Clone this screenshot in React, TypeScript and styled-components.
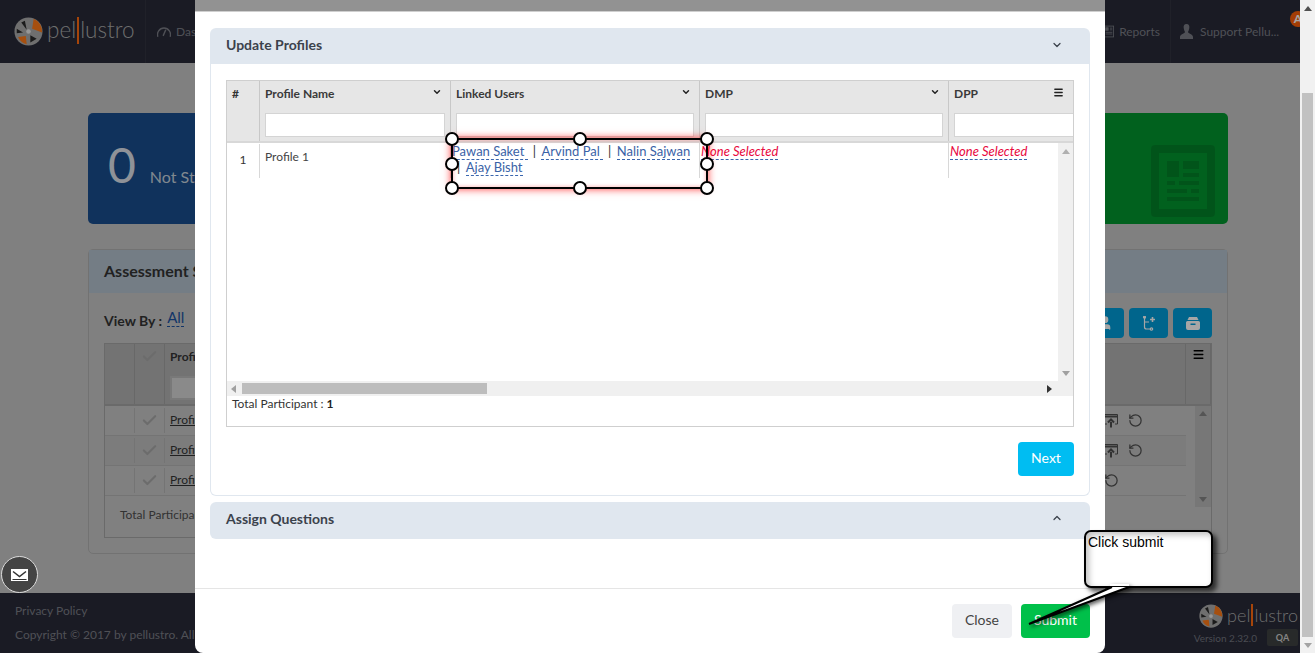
import { ChevronDown, ChevronUp, Menu, RotateCcw, Check, User } from "lucide-react";
import styled, { createGlobalStyle } from "styled-components";

const COLUMNS = "33px 191px 249px 249px";
const HANDLES = [
  [0, 0],
  [50, 0],
  [100, 0],
  [0, 50],
  [100, 50],
  [0, 100],
  [50, 100],
  [100, 100],
];
const BG_ROWS = [
  { shaded: false, upload: true },
  { shaded: true, upload: true },
  { shaded: false, upload: false },
];

function LogoMark({ size }: { size: number }) {
  return (
    <svg width={size} height={size} viewBox="0 0 32 32">
      <circle cx="16" cy="16" r="15.5" fill="#ababab" />
      <path d="M20 13 L21.7 2 A15 15 0 0 1 31 17 Z" fill="#ff7a17" />
      <path d="M13 21 L4.5 22 A14 14 0 0 0 14 30 Z" fill="#ff7a17" />
      <path d="M14 14 L8 6 L12 4 Z" fill="#2a2a2a" />
      <path d="M10 17 L3 18 L3 13 Z" fill="#2a2a2a" />
      <path d="M18 20 L25 24 L18 28 Z" fill="#2a2a2a" />
      <circle cx="16" cy="16" r="2.5" fill="#e8e8e8" />
    </svg>
  );
}

function Logo({ size, mark }: { size: number; mark: number }) {
  return (
    <LogoWrap>
      <LogoMark size={mark} />
      <LogoText $size={size}>
        pel<LogoBar />lustro
      </LogoText>
    </LogoWrap>
  );
}

export default function App() {
  return (
    <Shell>
      <GlobalStyle />
      <Page>
        <Header>
          <Brand>
            <Logo size={22.5} mark={29} />
          </Brand>
          <NavItem>
            <svg width="14" height="13" viewBox="0 0 16 14" fill="none" stroke="currentColor" strokeWidth="1.6">
              <path d="M1 13 A7.5 7.5 0 0 1 8 3" />
              <path d="M8 3 A7.5 7.5 0 0 1 15 13" />
              <path d="M7 12 L10 5" />
            </svg>
            Dashboard
          </NavItem>
          <NavSpacer />
          <NavItem>
            <svg width="10" height="13" viewBox="0 0 12 14" fill="none" stroke="currentColor">
              <rect x="0.5" y="0.5" width="11" height="13" />
              <rect x="2" y="2.5" width="3" height="3" fill="currentColor" />
              <path d="M7 3h3M7 5h3M2 8h8M2 10h8" />
            </svg>
            Reports
          </NavItem>
          <UserItem>
            <svg width="13" height="15" viewBox="0 0 13 15" fill="currentColor">
              <path d="M6.5 0 C9 0 9.6 2 9.3 4 C9 6 8.4 7 8 8 C8 9.5 13 10 13 13 V15 H0 V13 C0 10 5 9.5 5 8 C4.6 7 4 6 3.7 4 C3.4 2 4 0 6.5 0Z" />
            </svg>
            Support Pellu...
            <Badge>A</Badge>
          </UserItem>
        </Header>

        <Main>
          <Stats>
            <StatCard $color="#194d8e">
              <StatValue>0</StatValue>
              <StatLabel>Not Started</StatLabel>
            </StatCard>
            <StatCard $color="#c5c5c5" />
            <StatCard $color="#03952f">
              <StatIcon width="64" height="72" viewBox="0 0 64 72">
                <path
                  fillRule="evenodd"
                  d="M4 0H60a4 4 0 0 1 4 4V68a4 4 0 0 1-4 4H4a4 4 0 0 1-4-4V4a4 4 0 0 1 4-4ZM8 8V64H56V8Z"
                />
                <path d="M16 16H28V32H16ZM32 16H48V24H32ZM32 28H48V32H32ZM16 36H24V40H16ZM28 36H48V40H28ZM16 44H36V48H16ZM40 44H48V48H40ZM16 52H48V56H16Z" />
              </StatIcon>
            </StatCard>
          </Stats>

          <AssessmentPanel>
            <AssessmentTitle>Assessment Status</AssessmentTitle>
            <AssessmentBody>
              <ToolRow>
                <ViewBy>View By :</ViewBy>
                <AllLink>All</AllLink>
                <ToolSpacer />
                <ToolButton>
                  <User size={16} fill="#fff" />
                </ToolButton>
                <ToolButton>
                  <svg width="14" height="15" viewBox="0 0 14 15" fill="none" stroke="#fff" strokeWidth="1.2">
                    <path d="M2.5 1v10a2 2 0 0 0 2 2H8M2.5 6H7" />
                    <circle cx="2.5" cy="1.2" r="1" />
                    <circle cx="9.5" cy="13" r="1.2" />
                    <path d="M10.5 1v5M8 3.5h5" strokeWidth="1.6" />
                  </svg>
                </ToolButton>
                <ToolButton>
                  <svg width="16" height="13" viewBox="0 0 16 13" fill="#fff">
                    <path d="M4 0h8l1.5 3h-11Z" />
                    <path
                      fillRule="evenodd"
                      d="M2.5 4h11A1.5 1.5 0 0 1 15 5.500V11a2 2 0 0 1-2 2H3a2 2 0 0 1-2-2V5.500A1.500 1.500 0 0 1 2.500 4ZM5.500 6.500V8h5V6.500Z"
                    />
                  </svg>
                </ToolButton>
              </ToolRow>
              <BgTable>
                <BgHead>
                  <BgHeadCell $w={30} />
                  <BgHeadCell $w={30}>
                    <Check size={17} color="#a6a6a6" strokeWidth={3} />
                  </BgHeadCell>
                  <BgHeadMain>
                    Profile Name
                    <BgFilter />
                  </BgHeadMain>
                  <BgHeadCell $w={25}>
                    <Menu size={13} color="#000" strokeWidth={2.5} />
                  </BgHeadCell>
                </BgHead>
                <BgRows>
                  <BgRowList>
                    {BG_ROWS.map((row, i) => (
                      <BgRow key={i} $shaded={row.shaded}>
                        <BgCell $w={30} />
                        <BgCell $w={30}>
                          <Check size={17} color="#a6a6a6" strokeWidth={3} />
                        </BgCell>
                        <BgName>Profile {i + 1}</BgName>
                        <BgActions>
                          {row.upload && (
                            <svg width="14" height="15" viewBox="0 0 14 15" fill="none" stroke="#4e4e4e">
                              <path d="M3 11H0.5V1.5H13.5V11H11" />
                              <path d="M0.5 3.500H13.5" strokeWidth="2" />
                              <path d="M7 14.500V9M4 9.500L7 6.500L10 9.500" strokeWidth="2" />
                            </svg>
                          )}
                          <RotateCcw size={15} color="#4e4e4e" />
                        </BgActions>
                      </BgRow>
                    ))}
                    <BgTotal>Total Participant : 3</BgTotal>
                  </BgRowList>
                  <BgScroll>
                    <Arrow $dir="up" $color="#838383" />
                    <Arrow $dir="down" $color="#838383" />
                  </BgScroll>
                </BgRows>
              </BgTable>
            </AssessmentBody>
          </AssessmentPanel>
        </Main>

        <Footer>
          <FooterLeft>
            <FooterLink>Privacy Policy</FooterLink>
            <FooterLink>Copyright © 2017 by pellustro. All rights reserved.</FooterLink>
          </FooterLeft>
          <FooterRight>
            <Logo size={18} mark={24} />
            <VersionRow>
              Version 2.32.0
              <EnvChip>QA</EnvChip>
            </VersionRow>
          </FooterRight>
        </Footer>

        <Backdrop>
          <Modal>
            <ModalCap />
            <ModalBody>
              <Accordion>
                <AccordionHead>
                  Update Profiles
                  <ChevronDown size={12} strokeWidth={2.5} />
                </AccordionHead>
                <AccordionBody>
                  <TableBox>
                    <HeadRow>
                      <HashCell>#</HashCell>
                      <HeadCell>
                        <HeadLabel>
                          Profile Name
                          <ChevronDown size={10} strokeWidth={3.5} color="#222" />
                        </HeadLabel>
                        <Filter />
                      </HeadCell>
                      <HeadCell>
                        <HeadLabel>
                          Linked Users
                          <ChevronDown size={10} strokeWidth={3.5} color="#222" />
                        </HeadLabel>
                        <Filter />
                      </HeadCell>
                      <HeadCell>
                        <HeadLabel>
                          DMP
                          <ChevronDown size={10} strokeWidth={3.5} color="#222" />
                        </HeadLabel>
                        <Filter />
                      </HeadCell>
                      <LastHeadCell>
                        <LastHeadLabel>
                          DPP
                          <Menu size={11} strokeWidth={3} color="#222" />
                        </LastHeadLabel>
                        <LastFilter />
                      </LastHeadCell>
                    </HeadRow>

                    <RowsArea>
                      <DataRow>
                        <IndexCell>1</IndexCell>
                        <NameCell>Profile 1</NameCell>
                        <LinkCell>
                          <UserLink>Pawan Saket </UserLink>
                          <Sep>|</Sep>
                          <UserLink>Arvind Pal </UserLink>
                          <Sep>|</Sep>
                          <UserLink>Nalin Sajwan</UserLink>
                          <Sep>|</Sep>
                          <UserLink>Ajay Bisht</UserLink>
                        </LinkCell>
                        <LinkCell>
                          <EmptyLink>None Selected</EmptyLink>
                        </LinkCell>
                        <LastLinkCell>
                          <EmptyLink>None Selected</EmptyLink>
                        </LastLinkCell>
                      </DataRow>
                      <VScroll>
                        <Arrow $dir="up" $color="#b0b0b0" />
                        <Arrow $dir="down" $color="#a0a0a0" />
                      </VScroll>
                    </RowsArea>

                    <HScroll>
                      <Arrow $dir="left" $color="#a0a0a0" />
                      <HThumbTrack>
                        <HThumb />
                      </HThumbTrack>
                      <Arrow $dir="right" $color="#333" />
                    </HScroll>
                    <TotalLine>
                      Total Participant : <b>1</b>
                    </TotalLine>

                    <Selection>
                      <HandleLayer>
                        {HANDLES.map(([x, y]) => (
                          <HandleDot key={`${x}-${y}`} style={{ left: `${x}%`, top: `${y}%` }} />
                        ))}
                      </HandleLayer>
                    </Selection>
                  </TableBox>
                  <NextRow>
                    <NextButton>Next</NextButton>
                  </NextRow>
                </AccordionBody>
              </Accordion>
              <ClosedAccordion>
                Assign Questions
                <ChevronUp size={12} strokeWidth={2.5} />
              </ClosedAccordion>
            </ModalBody>
            <ModalFooter>
              <CloseButton>Close</CloseButton>
              <SubmitButton>Submit</SubmitButton>
            </ModalFooter>
          </Modal>
        </Backdrop>

        <MailBubble>
          <svg width="17" height="12" viewBox="0 0 17 12">
            <rect width="17" height="12" fill="#fff" />
            <path d="M2 2.500 L8.500 7.500 L15 2.500" fill="none" stroke="#333" strokeWidth="1.5" />
            <path d="M1.500 10.500 H15.500" stroke="#333" />
          </svg>
        </MailBubble>

        <Callout>
          Click submit
          <CalloutTail width="110" height="42" viewBox="0 0 110 42">
            <path d="M86 1 L3 38 L103 1" fill="#fff" stroke="#000" strokeWidth="2" />
            <path d="M84 0 L103 0 L103 -2 L84 -2 Z" fill="#fff" />
          </CalloutTail>
        </Callout>
      </Page>
      <PageScrollbar>
        <ScrollEnd>
          <Arrow $dir="up" $color="#505050" />
        </ScrollEnd>
        <PageThumb />
        <ScrollEnd>
          <Arrow $dir="down" $color="#a3a3a3" />
        </ScrollEnd>
      </PageScrollbar>
    </Shell>
  );
}

const GlobalStyle = createGlobalStyle`
  html, body {
    margin: 0;
    height: 100%;
    overflow: hidden;
    background: #c5c5c5;
    font-family: Lato, "Open Sans", sans-serif;
    font-size: 12px;
    color: #333;
  }
  * {
    box-sizing: border-box;
  }
`;

const Shell = styled.div`
  width: 1315px;
  height: 653px;
  display: flex;
  overflow: hidden;
`;

const Page = styled.div`
  position: relative;
  width: 1300px;
  height: 653px;
  display: flex;
  flex-direction: column;
  overflow: hidden;
`;

const LogoWrap = styled.div`
  display: flex;
  align-items: center;
  gap: 4px;
`;

const LogoText = styled.span<{ $size: number }>`
  display: inline-flex;
  align-items: center;
  margin-bottom: 2px;
  font-size: ${(props) => props.$size}px;
  font-weight: 300;
  color: #a9a9a9;
  line-height: 1;
`;

const LogoBar = styled.i`
  width: 2px;
  height: 1.2em;
  margin: 0 1px;
  background: #ff6a10;
`;

const Header = styled.header`
  height: 63px;
  flex-shrink: 0;
  display: flex;
  align-items: center;
  background: #282a38;
  color: #7a7c84;
  font-size: 12px;
`;

const Brand = styled.div`
  width: 146px;
  height: 100%;
  padding-left: 14px;
  display: flex;
  align-items: center;
  border-right: 1px solid #32343f;
`;

const NavItem = styled.div`
  display: flex;
  align-items: center;
  gap: 5px;
  padding: 0 10px 1px 11px;
  white-space: nowrap;
`;

const NavSpacer = styled.div`
  flex: 1;
`;

const UserItem = styled.div`
  position: relative;
  width: 130px;
  height: 100%;
  padding: 0 0 1px 9px;
  display: flex;
  align-items: center;
  gap: 7px;
  border-left: 1px solid #32343f;
  white-space: nowrap;
`;

const Badge = styled.span`
  position: absolute;
  left: 119px;
  top: 11px;
  width: 16px;
  height: 16px;
  border-radius: 50%;
  background: #fb5f08;
  color: #fff;
  font-size: 12px;
  font-weight: 700;
  text-align: center;
  line-height: 16px;
`;

const Main = styled.main`
  flex: 1;
  padding: 50px 72px 0 88px;
  display: flex;
  flex-direction: column;
  gap: 25px;
`;

const Stats = styled.section`
  display: grid;
  grid-template-columns: 340px 1fr 340px;
  gap: 20px;
`;

const StatCard = styled.div<{ $color: string }>`
  position: relative;
  height: 111px;
  padding: 0 20px;
  display: flex;
  align-items: center;
  gap: 14px;
  border-radius: 5px;
  background: ${(props) => props.$color};
  color: #dce1ea;
`;

const StatValue = styled.span`
  font-size: 48px;
  line-height: 1;
  margin-bottom: 7px;
`;

const StatLabel = styled.span`
  font-size: 16px;
  margin-top: 16px;
  color: #c5d1dc;
`;

const StatIcon = styled.svg`
  position: absolute;
  right: 13px;
  top: 32px;
  fill: rgba(0, 0, 0, 0.12);
`;

const AssessmentPanel = styled.section`
  height: 305px;
  border: 1px solid #b0b0b0;
  border-radius: 5px;
`;

const AssessmentTitle = styled.div`
  height: 43px;
  padding: 0 15px 3px;
  display: flex;
  align-items: center;
  background: #b2c0cc;
  font-size: 16px;
  font-weight: 700;
  color: #343434;
`;

const AssessmentBody = styled.div`
  padding: 15px;
`;

const ToolRow = styled.div`
  height: 35px;
  display: flex;
  align-items: flex-start;
  gap: 5px;
`;

const ViewBy = styled.span`
  margin-top: 4px;
  font-size: 14px;
  font-weight: 700;
  color: #343434;
`;

const AllLink = styled.span`
  margin-top: 1px;
  border-bottom: 1px dashed #1c52a0;
  font-size: 15px;
  line-height: 17px;
  color: #1c52a0;
`;

const ToolSpacer = styled.div`
  flex: 1;
`;

const ToolButton = styled.div`
  width: 39px;
  height: 30px;
  display: flex;
  align-items: center;
  justify-content: center;
  border-radius: 4px;
  background: #009bd7;
  color: #fff;
`;

const BgTable = styled.div`
  height: 195px;
  border: 1px solid #a3a3a3;
`;

const BgHead = styled.div`
  height: 62px;
  display: flex;
  background: #b1b1b1;
  border-bottom: 2px solid #a3a3a3;
`;

const BgHeadCell = styled.div<{ $w: number }>`
  width: ${(props) => props.$w}px;
  padding-top: 4px;
  display: flex;
  justify-content: center;
  border-right: 1px solid #a0a0a0;
`;

const BgHeadMain = styled.div`
  flex: 1;
  padding: 5px 5px;
  font-weight: 700;
  color: #343434;
  border-right: 1px solid #a0a0a0;
`;

const BgFilter = styled.div`
  width: 180px;
  height: 24px;
  margin-top: 12px;
  background: #d4d4d4;
  border: 2px solid #bbb;
`;

const BgRows = styled.div`
  display: flex;
`;

const BgRowList = styled.div`
  flex: 1;
`;

const BgRow = styled.div<{ $shaded: boolean }>`
  height: 30px;
  margin-right: 9px;
  display: flex;
  align-items: center;
  background: ${(props) => (props.$shaded ? "#bfbfbf" : "transparent")};
  border-bottom: 1px solid #b3b3b3;
`;

const BgCell = styled.div<{ $w: number }>`
  width: ${(props) => props.$w}px;
  height: 25px;
  display: flex;
  align-items: center;
  justify-content: center;
  border-right: 1px solid #b3b3b3;
`;

const BgName = styled.span`
  flex: 1;
  padding: 0 5px 2px;
  text-decoration: underline;
  color: #343434;
`;

const BgActions = styled.div`
  width: 82px;
  display: flex;
  align-items: center;
  gap: 10px;
`;

const BgTotal = styled.div`
  padding: 11px 15px;
  color: #4e4e4e;
`;

const BgScroll = styled.div`
  width: 16px;
  height: 101px;
  padding: 5px 0;
  display: flex;
  flex-direction: column;
  align-items: center;
  justify-content: space-between;
  background: #b7b7b7;
`;

const Footer = styled.footer`
  height: 60px;
  flex-shrink: 0;
  margin-top: auto;
  padding: 11px 2px 6px 15px;
  display: flex;
  justify-content: space-between;
  background: #282a38;
`;

const FooterLeft = styled.div`
  margin-top: -1px;
  display: flex;
  flex-direction: column;
  gap: 8px;
`;

const FooterLink = styled.div`
  font-size: 12px;
  line-height: 16px;
  color: #7a7c84;
`;

const FooterRight = styled.div`
  display: flex;
  flex-direction: column;
  align-items: flex-end;
`;

const VersionRow = styled.div`
  margin-top: 1px;
  display: flex;
  align-items: center;
  gap: 10px;
  font-size: 10px;
  color: #72747e;
`;

const EnvChip = styled.span`
  width: 31px;
  height: 17px;
  display: flex;
  align-items: center;
  justify-content: center;
  border-radius: 2px;
  background: #3e4141;
  font-size: 9px;
  font-weight: 700;
  color: #ccc;
`;

const Backdrop = styled.div`
  position: absolute;
  inset: 0;
  display: flex;
  justify-content: center;
  background: rgba(0, 0, 0, 0.35);
`;

const Modal = styled.div`
  width: 910px;
  height: 653px;
  display: flex;
  flex-direction: column;
  background: #fff;
  border-radius: 0 0 8px 8px;
`;

const ModalCap = styled.div`
  height: 12px;
  flex-shrink: 0;
  background: #929292;
  border-bottom: 1px solid #cfcfcf;
`;

const ModalBody = styled.div`
  flex: 1;
  padding: 16px 15px;
`;

const Accordion = styled.section`
  margin-bottom: 6px;
`;

const AccordionHead = styled.div`
  height: 36px;
  padding: 0 27px 3px 16px;
  display: flex;
  align-items: center;
  justify-content: space-between;
  border-radius: 6px 6px 0 0;
  background: #e0e7ef;
  font-size: 14px;
  font-weight: 700;
  color: #3b424c;
`;

const ClosedAccordion = styled(AccordionHead)`
  height: 37px;
  padding-bottom: 5px;
  border-radius: 6px;
`;

const AccordionBody = styled.div`
  height: 432px;
  padding: 16px 15px;
  border: 1px solid #e0e7ef;
  border-top: 0;
  border-radius: 0 0 6px 6px;
`;

const TableBox = styled.div`
  position: relative;
  height: 347px;
  border: 1px solid #cfcfcf;
  display: flex;
  flex-direction: column;
`;

const HeadRow = styled.div`
  height: 62px;
  flex-shrink: 0;
  display: grid;
  grid-template-columns: ${COLUMNS} 1fr;
  background: #e6e6e6;
  border-bottom: 2px solid #d8d8d8;
  overflow: hidden;
`;

const HashCell = styled.div`
  padding: 6px 5px;
  font-weight: 700;
  line-height: 14px;
  border-right: 1px solid #c8c8c8;
`;

const HeadCell = styled.div`
  min-width: 0;
  padding: 0 5px;
  border-right: 1px solid #c8c8c8;
`;

const LastHeadCell = styled(HeadCell)`
  border-right: 0;
  padding-right: 0;
  overflow: hidden;
`;

const HeadLabel = styled.div`
  height: 32px;
  padding: 6px 3px 0 0;
  display: flex;
  align-items: flex-start;
  justify-content: space-between;
  font-weight: 700;
  line-height: 14px;
  color: #3a3a3a;
`;

const LastHeadLabel = styled(HeadLabel)`
  padding-right: 9px;
`;

const Filter = styled.input`
  display: block;
  width: 100%;
  height: 24px;
  background: #fff;
  border: 1px solid #d4d4d4;
  outline: 0;
`;

const LastFilter = styled(Filter)`
  width: 135px;
`;

const RowsArea = styled.div`
  height: 238px;
  display: flex;
`;

const DataRow = styled.div`
  flex: 1;
  height: 35px;
  display: grid;
  grid-template-columns: ${COLUMNS} 1fr;
`;

const BodyCell = styled.div`
  margin-top: 1px;
  border-right: 1px solid #d8d8d8;
  line-height: 16px;
`;

const IndexCell = styled(BodyCell)`
  padding-top: 8px;
  text-align: center;
  color: #333;
`;

const NameCell = styled(BodyCell)`
  padding: 5px 5px 0;
  color: #444;
`;

const LinkCell = styled(BodyCell)`
  margin-top: 0;
  padding-left: 1px;
  font-size: 13px;
`;

const LastLinkCell = styled(LinkCell)`
  border-right: 0;
`;

const UserLink = styled.a`
  border-bottom: 1px dashed #3a66ae;
  color: #3a62a6;
  white-space: pre;
`;

const Sep = styled.span`
  display: inline-block;
  margin: 0 5.5px 0 5px;
  color: #333;
`;

const EmptyLink = styled.a`
  border-bottom: 1px dashed #3a66ae;
  font-style: italic;
  color: #e8083e;
`;

const VScroll = styled.div`
  width: 15px;
  padding: 6px 0 5px;
  display: flex;
  flex-direction: column;
  align-items: center;
  justify-content: space-between;
  background: #f0f0f0;
`;

const HScroll = styled.div`
  height: 15px;
  flex-shrink: 0;
  padding: 0 21px 0 4px;
  display: flex;
  align-items: center;
  background: #f0f0f0;
`;

const HThumbTrack = styled.div`
  flex: 1;
  height: 11px;
  padding-left: 6px;
`;

const HThumb = styled.div`
  width: 245px;
  height: 100%;
  background: #bdbdbd;
`;

const TotalLine = styled.div`
  padding: 0 5px;
  line-height: 16px;
  color: #333;

  b {
    color: #222;
  }
`;

const Selection = styled.div`
  position: absolute;
  left: 224px;
  top: 57px;
  width: 257px;
  height: 51px;
  border: 2px solid #000;
  box-shadow:
    0 0 8px rgba(255, 0, 0, 0.75),
    inset 0 0 4px rgba(255, 0, 0, 0.35);
`;

const HandleLayer = styled.div`
  position: absolute;
  inset: -1px;
`;

const HandleDot = styled.span`
  position: absolute;
  width: 14px;
  height: 14px;
  margin: -7px 0 0 -7px;
  border-radius: 50%;
  background: #fff;
  border: 2px solid #000;
`;

const NextRow = styled.div`
  display: flex;
  justify-content: flex-end;
  margin-top: 15px;
`;

const NextButton = styled.button`
  width: 56px;
  height: 34px;
  padding: 0 0 3px;
  border: 0;
  border-radius: 4px;
  background: #00bdf2;
  color: #fff;
  font-family: inherit;
  font-size: 14px;
`;

const ModalFooter = styled.div`
  height: 65px;
  flex-shrink: 0;
  padding: 15px;
  display: flex;
  justify-content: flex-end;
  gap: 9px;
  border-top: 1px solid #e5e5e5;
`;

const CloseButton = styled.button`
  width: 60px;
  height: 34px;
  padding: 0 0 3px;
  border: 0;
  border-radius: 4px;
  background: #eff0f3;
  color: #444;
  font-family: inherit;
  font-size: 14px;
`;

const SubmitButton = styled(CloseButton)`
  width: 69px;
  background: #00c04a;
  color: #fff;
`;

const MailBubble = styled.div`
  position: absolute;
  left: 1px;
  top: 556px;
  width: 37px;
  height: 37px;
  display: flex;
  align-items: center;
  justify-content: center;
  border-radius: 50%;
  background: #444;
  border: 1.5px solid #ddd;
`;

const Callout = styled.div`
  position: absolute;
  left: 1084px;
  top: 530px;
  width: 129px;
  height: 58px;
  padding: 2px 2px;
  background: #fff;
  border: 2px solid #000;
  border-radius: 7px;
  box-shadow: inset 3px 3px 6px rgba(0, 0, 0, 0.25), 4px 4px 5px rgba(0, 0, 0, 0.65);
  font-family: "Liberation Sans", Arial, sans-serif;
  font-size: 14px;
  line-height: 16px;
  color: #000;
`;

const CalloutTail = styled.svg`
  position: absolute;
  left: -60px;
  top: 54px;
  overflow: visible;
  filter: drop-shadow(2px 2px 2px rgba(0, 0, 0, 0.65));
`;

const Arrow = styled.span<{ $dir: "up" | "down" | "left" | "right"; $color: string }>`
  display: block;
  width: 0;
  height: 0;
  flex-shrink: 0;
  border-style: solid;
  border-color: transparent;
  ${(props) =>
    props.$dir === "up"
      ? `border-width: 0 4px 5px; border-bottom-color: ${props.$color};`
      : props.$dir === "down"
        ? `border-width: 5px 4px 0; border-top-color: ${props.$color};`
        : props.$dir === "left"
          ? `border-width: 4px 5px 4px 0; border-right-color: ${props.$color};`
          : `border-width: 4px 0 4px 5px; border-left-color: ${props.$color};`}
`;

const PageScrollbar = styled.div`
  width: 15px;
  height: 653px;
  flex-shrink: 0;
  display: flex;
  flex-direction: column;
  background: #f1f1f1;
`;

const ScrollEnd = styled.div`
  height: 16px;
  flex-shrink: 0;
  display: flex;
  align-items: center;
  justify-content: center;
`;

const PageThumb = styled.div`
  flex: 1;
  margin: 77px 2px 0;
  background: #c1c1c1;
`;
